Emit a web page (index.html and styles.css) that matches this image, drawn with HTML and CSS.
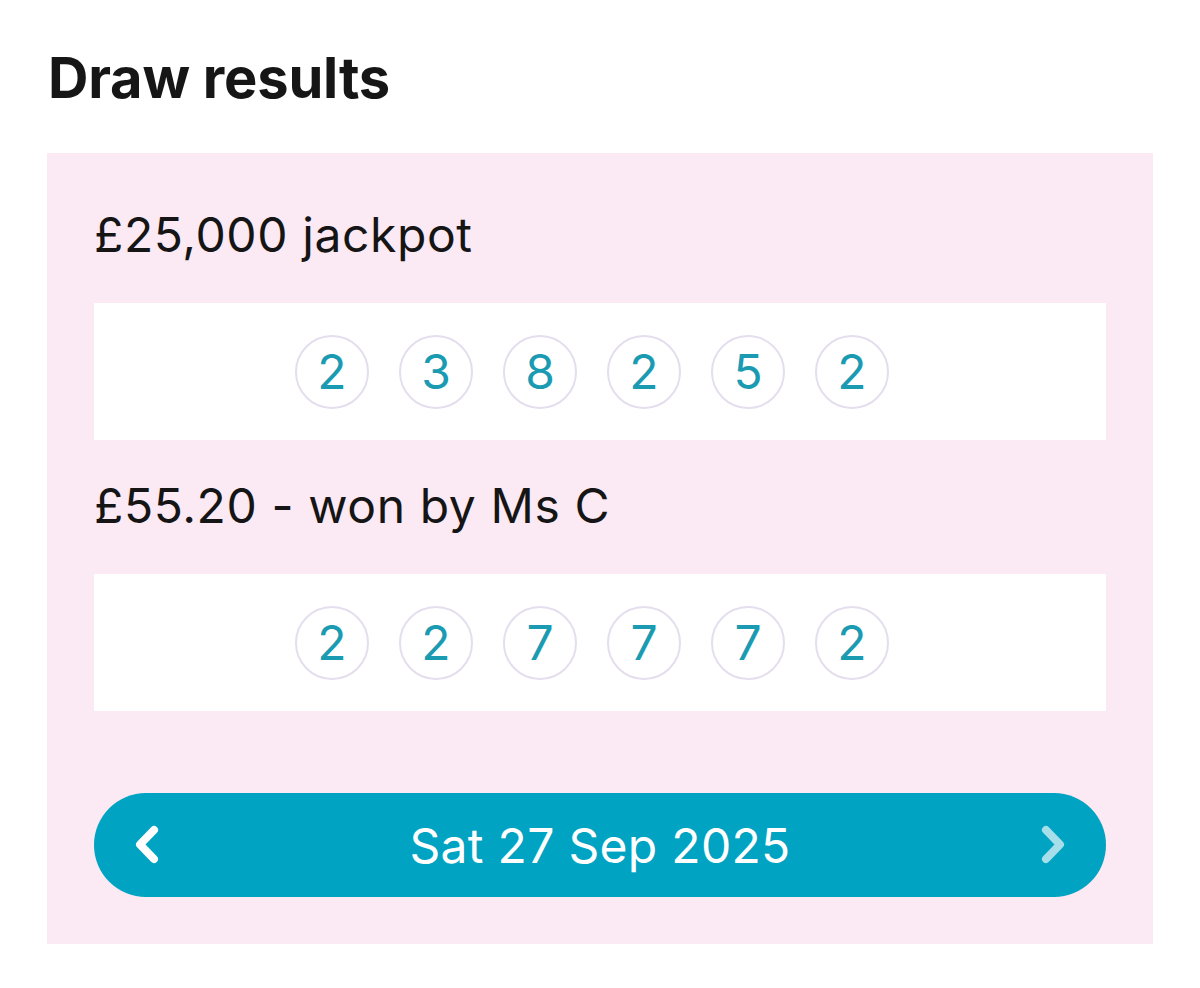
FILE: index.html
```html
<!DOCTYPE html>
<html lang="en-GB">
<head>
  <meta charset="UTF-8">
  <meta name="viewport" content="width=device-width, initial-scale=1.0">
  <title>Draw results</title>
  <link rel="stylesheet" href="styles.css">
</head>
<body>
  <div class="page">
    <h1>Draw results</h1>

    <div class="results">
      <p class="prize">£25,000 jackpot</p>
      <div class="balls">
        <span class="ball">2</span>
        <span class="ball">3</span>
        <span class="ball">8</span>
        <span class="ball">2</span>
        <span class="ball">5</span>
        <span class="ball">2</span>
      </div>

      <p class="prize">£55.20 - won by Ms C</p>
      <div class="balls">
        <span class="ball">2</span>
        <span class="ball">2</span>
        <span class="ball">7</span>
        <span class="ball">7</span>
        <span class="ball">7</span>
        <span class="ball">2</span>
      </div>

      <div class="date-nav">
        <button class="nav-btn prev" aria-label="Previous draw">
          <svg width="26" height="40" viewBox="0 0 26 40"><path d="M20 5 L6 19.5 L20 34" fill="none" stroke="currentColor" stroke-width="8" stroke-linecap="round" stroke-linejoin="round"/></svg>
        </button>
        <span class="date">Sat 27 Sep 2025</span>
        <button class="nav-btn next" aria-label="Next draw">
          <svg width="26" height="40" viewBox="0 0 26 40"><path d="M6 5 L20 19.5 L6 34" fill="none" stroke="currentColor" stroke-width="8" stroke-linecap="round" stroke-linejoin="round"/></svg>
        </button>
      </div>
    </div>
  </div>
</body>
</html>
```

FILE: styles.css
```css
body { margin: 0; background: #fff; font-family: Inter, "Noto Sans", sans-serif; color: #151515; }
.page { padding: 44px 0 0 47px; width: 1106px; }
h1 { margin: 0 0 0 1px; font-size: 56px; line-height: 68px; font-weight: 700; color: #161616; letter-spacing: -0.2px; }
.results { margin-top: 41px; background: #fbe9f4; padding: 54px 47px 47px; }
.prize { margin: 0 0 40px; font-size: 48px; line-height: 56px; font-weight: 400; letter-spacing: 0.6px; }
.balls { background: #fff; height: 137px; display: flex; align-items: center; justify-content: center; gap: 30px; padding-right: 16px; margin-bottom: 38px; }
.ball { width: 70px; height: 70px; border: 2px solid #e5deee; border-radius: 50%; display: flex; align-items: center; justify-content: center; font-size: 48px; color: #1b9bb2; }
.date-nav { margin-top: 82px; height: 104px; border-radius: 52px; background: #00a3c1; display: flex; align-items: center; justify-content: space-between; padding: 0 40px; }
.nav-btn { background: none; border: none; padding: 0; width: 26px; height: 40px; cursor: pointer; }
.nav-btn.prev { color: #fff; }
.nav-btn.next { color: #a6dfea; }
.date { color: #fff; font-size: 48px; letter-spacing: 0.3px; }
```
